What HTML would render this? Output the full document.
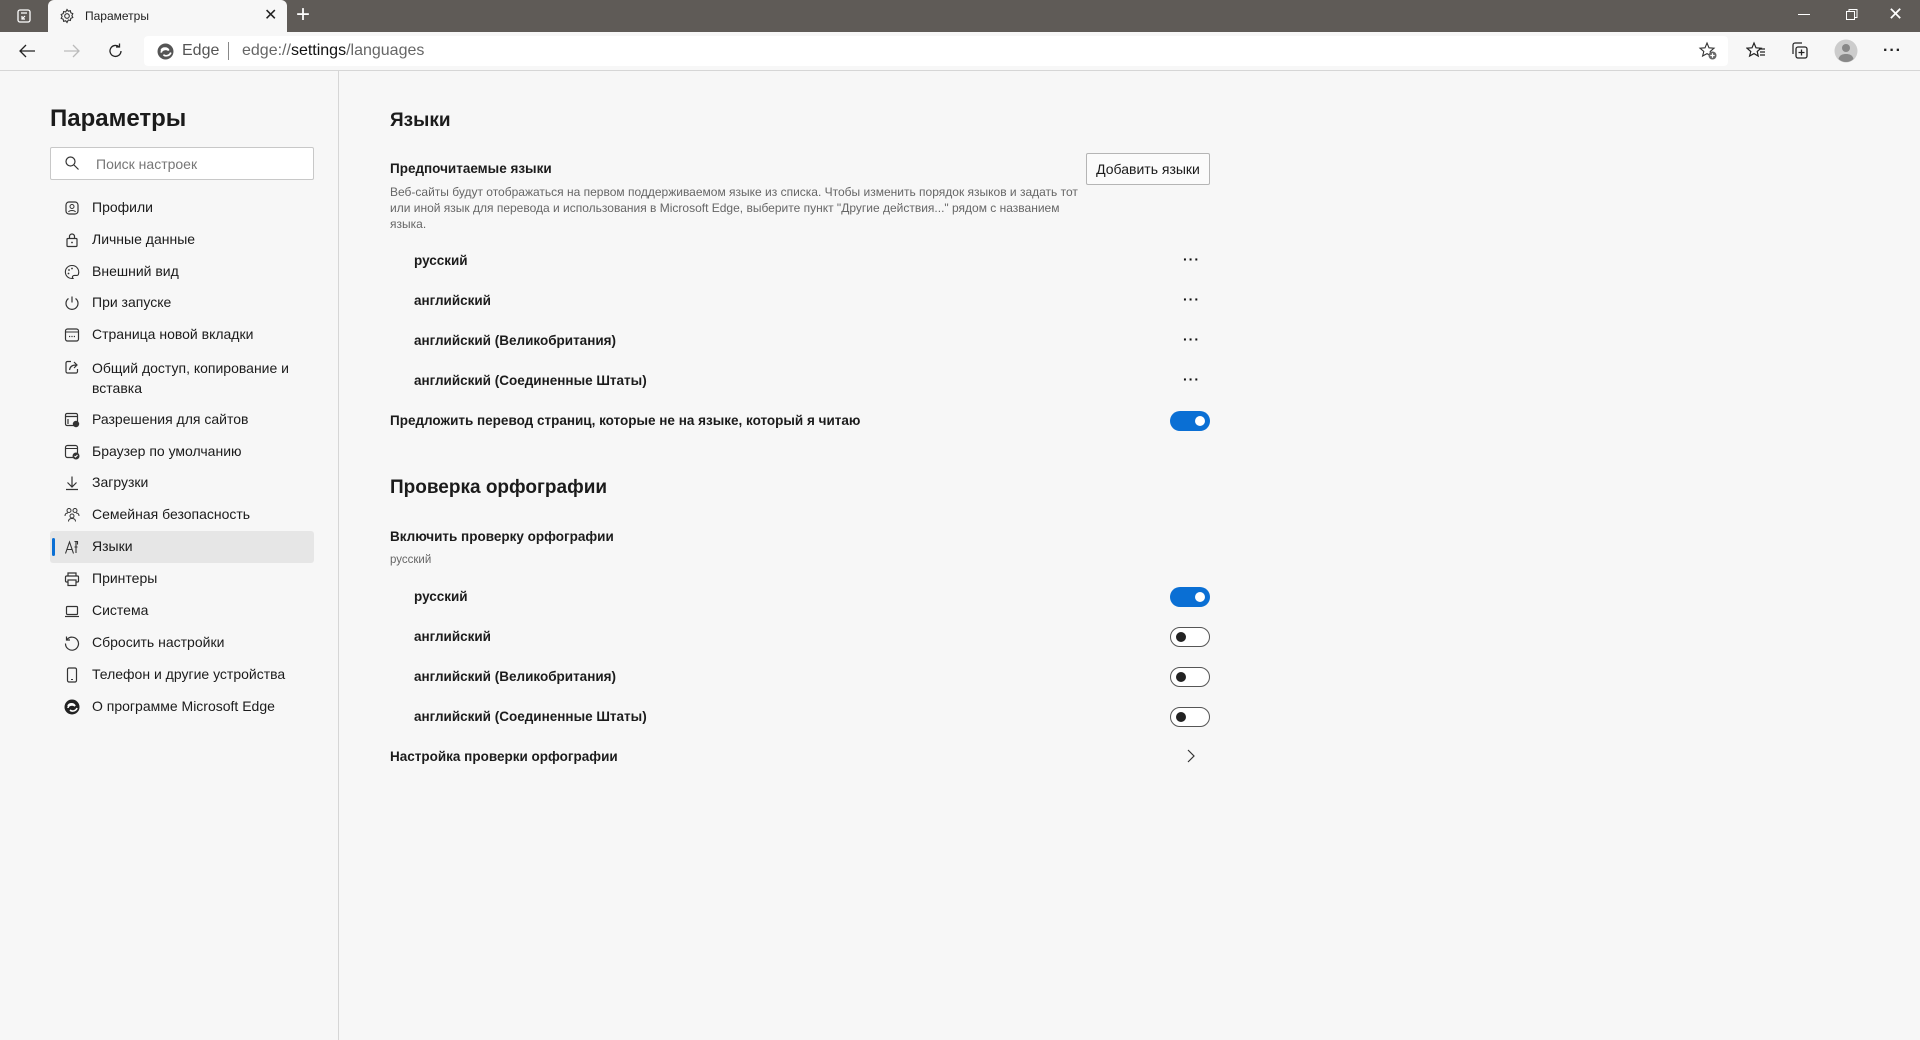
<!DOCTYPE html>
<html><head><meta charset="utf-8"><style>
*{box-sizing:border-box;margin:0;padding:0}
body{width:1920px;height:1040px;overflow:hidden;background:#f7f7f7;font-family:"Liberation Sans","Noto Sans CJK SC",sans-serif;color:#1b1b1b;position:relative}
.a{position:absolute;white-space:nowrap}
.title{top:0;left:0;width:1920px;height:32px;background:#5f5b57}
.tab{left:48px;top:0;width:239px;height:33px;background:#f7f7f7;border-radius:6px 6px 0 0}
.tb{top:32px;left:0;width:1920px;height:39px;background:#f7f7f7;border-bottom:1px solid #d6d6d6}
.addr{left:144px;top:36px;width:1584px;height:30px;background:#fff;border-radius:4px}
.side{left:0;top:71px;width:339px;height:969px;border-right:1px solid #d6d6d6}
.nav{left:92px;font-size:14px;color:#1b1b1b}
.ic{left:64px;width:16px;height:16px}
.lbl{font-size:13.5px;font-weight:600;color:#1b1b1b}
.lang{left:414px;font-size:13.5px;font-weight:600}
.dots{left:1183px;font-size:14px;font-weight:700;letter-spacing:1px;color:#111}
.tog{left:1170px;width:40px;height:20px;border-radius:10px}
.on{background:#0a6fd4}
.on::after{content:"";position:absolute;right:5px;top:5px;width:10px;height:10px;border-radius:50%;background:#fff}
.off{border:1px solid #555;background:#fff}
.off::after{content:"";position:absolute;left:5px;top:4px;width:10px;height:10px;border-radius:50%;background:#222}
</style></head><body>
<div class="a title"></div>
<svg class="a" style="left:16px;top:8px" width="16" height="16" viewBox="0 0 16 16"><rect x="2" y="2" width="12" height="12" rx="2" fill="none" stroke="#fff" stroke-width="1.3"/><path d="M5 5h6M9 8l-3 3M6 8v3h3" stroke="#fff" stroke-width="1.2" fill="none"/></svg>
<div class="a tab"></div>
<svg class="a" style="left:59px;top:8px" width="16" height="16" viewBox="0 0 16 16"><circle cx="8" cy="8" r="2.3" fill="none" stroke="#333" stroke-width="1.1"/><path d="M8 1.5l1.3 1.7 2.1-.5.4 2.1 2 .9-.9 1.9.9 1.9-2 .9-.4 2.1-2.1-.5L8 14.5l-1.3-1.7-2.1.5-.4-2.1-2-.9.9-1.9-.9-1.9 2-.9.4-2.1 2.1.5z" fill="none" stroke="#333" stroke-width="1.1"/></svg>
<div class="a" style="left:85px;top:9px;font-size:12px;color:#222">Параметры</div>
<div class="a" style="left:264px;top:5px;font-size:16px;color:#222">✕</div>
<div class="a" style="left:296px;top:1px;font-size:24px;color:#fff;font-weight:300">+</div>
<div class="a" style="left:1798px;top:14px;width:12px;height:1px;background:#fff"></div>
<svg class="a" style="left:1845px;top:8px" width="14" height="14" viewBox="0 0 14 14"><rect x="1.5" y="3.5" width="8" height="8" fill="none" stroke="#fff"/><path d="M4 3.5V1.5h8v8h-2.5" fill="none" stroke="#fff"/></svg>
<div class="a" style="left:1888px;top:4px;font-size:18px;color:#fff">✕</div>
<div class="a tb"></div>
<svg class="a" style="left:18px;top:43px" width="18" height="16" viewBox="0 0 18 16"><path d="M17 8H2M8 2L2 8l6 6" fill="none" stroke="#222" stroke-width="1.3"/></svg>
<svg class="a" style="left:63px;top:43px" width="18" height="16" viewBox="0 0 18 16"><path d="M1 8h15M10 2l6 6-6 6" fill="none" stroke="#bbb" stroke-width="1.3"/></svg>
<svg class="a" style="left:107px;top:42px" width="18" height="18" viewBox="0 0 18 18"><path d="M14 9a5.5 5.5 0 1 1-2-4.3M12.5 1.5v3.5H9" fill="none" stroke="#222" stroke-width="1.3"/></svg>
<div class="a addr"></div>
<svg class="a" style="left:157px;top:43px" width="17" height="17" viewBox="0 0 16 16"><circle cx="8" cy="8" r="7.5" fill="#555"/><path d="M4 9c0-3 5-4 7-2-1-3-6-3-7 0M6 11c2 2 6 1 7-2" stroke="#fff" stroke-width="1.6" fill="none"/></svg>
<div class="a" style="left:182px;top:42px;font-size:16px;color:#555">Edge</div>
<div class="a" style="left:228px;top:42px;width:1px;height:18px;background:#888"></div>
<div class="a" style="left:242px;top:42px;font-size:16px;color:#666">edge://<span style="color:#111">settings</span>/languages</div>
<svg class="a" style="left:1698px;top:41px" width="20" height="20" viewBox="0 0 20 20"><path d="M9 2l2 4.8 5 .4-3.8 3.3 1 4.5L9 12.6 4.6 15l1.2-4.5L2 7.2l5-.4z" fill="none" stroke="#333" stroke-width="1.1"/><circle cx="14.5" cy="14.5" r="4" fill="#666"/><path d="M14.5 12.3v4.4M12.3 14.5h4.4" stroke="#fff" stroke-width="1.2"/></svg>
<svg class="a" style="left:1746px;top:41px" width="20" height="20" viewBox="0 0 20 20"><path d="M8 2l2 4.8 5 .4-3.8 3.3 1 4.5L8 12.6 3.6 15l1.2-4.5L1 7.2l5-.4z" fill="none" stroke="#222" stroke-width="1.2"/><path d="M13 8h6M14 11h5M14 14h5" stroke="#222" stroke-width="1.2"/></svg>
<svg class="a" style="left:1790px;top:41px" width="20" height="20" viewBox="0 0 20 20"><path d="M3 13V4a2 2 0 0 1 2-2h7" fill="none" stroke="#222" stroke-width="1.2"/><rect x="6" y="6" width="11" height="11" rx="2" fill="none" stroke="#222" stroke-width="1.3"/><path d="M11.5 8.5v6M8.5 11.5h6" stroke="#222" stroke-width="1.3"/></svg>
<svg class="a" style="left:1834px;top:39px" width="24" height="24" viewBox="0 0 24 24"><circle cx="12" cy="12" r="11.5" fill="#ccc"/><circle cx="12" cy="9" r="4" fill="#888"/><path d="M4.5 20c1-4 4-5 7.5-5s6.5 1 7.5 5a11 11 0 0 1-15 0z" fill="#888"/></svg>
<div class="a" style="left:1883px;top:42px;font-size:16px;font-weight:700;letter-spacing:1px;color:#222">···</div>

<div class="a side"></div>
<div class="a" style="left:50px;top:105px;font-size:24px;font-weight:600;color:#1b1b1b">Параметры</div>
<div class="a" style="left:50px;top:147px;width:264px;height:33px;background:#fff;border:1px solid #c8c8c8;border-radius:2px"></div>
<svg class="a" style="left:64px;top:155px" width="16" height="16" viewBox="0 0 16 16"><circle cx="6.5" cy="6.5" r="4.5" fill="none" stroke="#333" stroke-width="1.2"/><path d="M10 10l4.5 4.5" stroke="#333" stroke-width="1.2"/></svg>
<div class="a" style="left:96px;top:156px;font-size:14px;color:#777">Поиск настроек</div>
<div class="a" style="left:50px;top:531px;width:264px;height:32px;background:#e6e6e6;border-radius:3px"></div>
<div class="a" style="left:52px;top:538px;width:3px;height:18px;background:#0a6fd4;border-radius:2px"></div>

<svg class="a ic" style="top:200px" viewBox="0 0 16 16"><rect x="2" y="2" width="12" height="12" rx="3" fill="none" stroke="#333" stroke-width="1.2"/><circle cx="8" cy="6.5" r="2" fill="none" stroke="#333"/><path d="M4.5 12c1-2 6-2 7 0" fill="none" stroke="#333"/></svg>
<div class="a nav" style="top:199px">Профили</div>
<svg class="a ic" style="top:232px" viewBox="0 0 16 16"><rect x="3" y="6.5" width="10" height="8" rx="1" fill="none" stroke="#333" stroke-width="1.2"/><path d="M5.5 6.5V4.5a2.5 2.5 0 0 1 5 0v2" fill="none" stroke="#333" stroke-width="1.2"/><circle cx="8" cy="10.5" r=".9" fill="#333"/></svg>
<div class="a nav" style="top:231px">Личные данные</div>
<svg class="a ic" style="top:264px" viewBox="0 0 16 16"><path d="M8 1.5a6.5 6.5 0 1 0 1 12.9c-1.5-1.5 0-3 1.5-3h2.5a1.5 1.5 0 0 0 1.5-1.6A6.6 6.6 0 0 0 8 1.5z" fill="none" stroke="#333" stroke-width="1.1"/><circle cx="5" cy="6" r=".9" fill="#333"/><circle cx="8" cy="4.5" r=".9" fill="#333"/><circle cx="4.5" cy="9.5" r=".9" fill="#333"/></svg>
<div class="a nav" style="top:263px">Внешний вид</div>
<svg class="a ic" style="top:295px" viewBox="0 0 16 16"><path d="M8 1.5v6M4.5 3.5a6 6 0 1 0 7 0" fill="none" stroke="#333" stroke-width="1.2"/></svg>
<div class="a nav" style="top:294px">При запуске</div>
<svg class="a ic" style="top:327px" viewBox="0 0 16 16"><rect x="1.5" y="2" width="13" height="12" rx="2" fill="none" stroke="#333" stroke-width="1.2"/><path d="M1.5 5h13" stroke="#333"/><path d="M5 9.5h1.2M7.4 9.5h1.2M9.8 9.5h1.2" stroke="#333" stroke-width="1.3"/></svg>
<div class="a nav" style="top:326px">Страница новой вкладки</div>
<svg class="a ic" style="top:359px" viewBox="0 0 16 16"><path d="M7 2.5H3.5a1.5 1.5 0 0 0-1.5 1.5v8.5A1.5 1.5 0 0 0 3.5 14H12a1.5 1.5 0 0 0 1.5-1.5V10" fill="none" stroke="#333" stroke-width="1.2"/><path d="M5.5 11c.5-3.5 3-5 6.5-5M10 3l3 3-3 3" fill="none" stroke="#333" stroke-width="1.2"/></svg>
<div class="a nav" style="top:358px;line-height:20px;white-space:normal;width:215px">Общий доступ, копирование и вставка</div>
<svg class="a ic" style="top:412px" viewBox="0 0 16 16"><rect x="1.5" y="1.5" width="12" height="12" rx="1.5" fill="none" stroke="#333" stroke-width="1.2"/><path d="M1.5 4.5h12M4 7v5" stroke="#333" stroke-width="1.2"/><circle cx="12" cy="12" r="3.2" fill="#333"/></svg>
<div class="a nav" style="top:411px">Разрешения для сайтов</div>
<svg class="a ic" style="top:444px" viewBox="0 0 16 16"><rect x="1.5" y="1.5" width="12" height="12" rx="2" fill="none" stroke="#333" stroke-width="1.2"/><path d="M1.5 4.5h12" stroke="#333"/><circle cx="12" cy="12" r="3.5" fill="#333"/><path d="M10.5 12l1 1 2-2" stroke="#fff" fill="none"/></svg>
<div class="a nav" style="top:443px">Браузер по умолчанию</div>
<svg class="a ic" style="top:475px" viewBox="0 0 16 16"><path d="M8 1.5v10M3.5 7.5l4.5 4.5 4.5-4.5M2 14.5h12" fill="none" stroke="#333" stroke-width="1.2"/></svg>
<div class="a nav" style="top:474px">Загрузки</div>
<svg class="a ic" style="top:507px" viewBox="0 0 16 16"><circle cx="5" cy="3.5" r="2" fill="none" stroke="#333"/><circle cx="11" cy="3.5" r="2" fill="none" stroke="#333"/><circle cx="8" cy="9" r="2" fill="none" stroke="#333"/><path d="M1 9c0-2 1-3 3-3M15 9c0-2-1-3-3-3M4.5 14.5c0-2 1.5-3 3.5-3s3.5 1 3.5 3" fill="none" stroke="#333"/></svg>
<div class="a nav" style="top:506px">Семейная безопасность</div>
<svg class="a ic" style="top:539px" viewBox="0 0 16 16"><path d="M1.5 14.5L5.5 3l4 11.5M3 10.5h5M10.5 2.5h3v3M12 3v11M10.5 8h3" fill="none" stroke="#333" stroke-width="1.1"/></svg>
<div class="a nav" style="top:538px">Языки</div>
<svg class="a ic" style="top:571px" viewBox="0 0 16 16"><path d="M4 5V2h8v3M4 11H2.5a1 1 0 0 1-1-1V6a1 1 0 0 1 1-1h11a1 1 0 0 1 1 1v4a1 1 0 0 1-1 1H12" fill="none" stroke="#333" stroke-width="1.2"/><rect x="4" y="9" width="8" height="5.5" fill="none" stroke="#333" stroke-width="1.2"/></svg>
<div class="a nav" style="top:570px">Принтеры</div>
<svg class="a ic" style="top:603px" viewBox="0 0 16 16"><rect x="2.5" y="3.5" width="11" height="8" rx="1" fill="none" stroke="#333" stroke-width="1.2"/><path d="M1 13.5h14" stroke="#333" stroke-width="1.2"/></svg>
<div class="a nav" style="top:602px">Система</div>
<svg class="a ic" style="top:635px" viewBox="0 0 16 16"><path d="M3 4.5A6.5 6.5 0 1 1 1.5 8.5M2.5 1.5v3.5H6" fill="none" stroke="#333" stroke-width="1.2"/></svg>
<div class="a nav" style="top:634px">Сбросить настройки</div>
<svg class="a ic" style="top:667px" viewBox="0 0 16 16"><rect x="3.5" y="1" width="9" height="14" rx="1.5" fill="none" stroke="#333" stroke-width="1.2"/><path d="M7 12.5h2" stroke="#333"/></svg>
<div class="a nav" style="top:666px">Телефон и другие устройства</div>
<svg class="a ic" style="top:699px" viewBox="0 0 16 16"><circle cx="8" cy="8" r="7.5" fill="#222"/><path d="M4 9c0-3 5-4 7-2-1-3-6-3-7 0M6 11c2 2 6 1 7-2" stroke="#fff" stroke-width="1.6" fill="none"/></svg>
<div class="a nav" style="top:698px">О программе Microsoft Edge</div>

<div class="a" style="left:390px;top:110px;font-size:19px;font-weight:600">Языки</div>
<div class="a lbl" style="left:390px;top:161px">Предпочитаемые языки</div>
<div class="a" style="left:1086px;top:153px;width:124px;height:32px;border:1px solid #b5b5b5;border-radius:2px;font-size:14px;text-align:center;line-height:30px;background:#fbfbfb">Добавить языки</div>
<div class="a" style="left:390px;top:184px;width:690px;white-space:normal;font-size:12px;line-height:16px;color:#666">Веб-сайты будут отображаться на первом поддерживаемом языке из списка. Чтобы изменить порядок языков и задать тот или иной язык для перевода и использования в Microsoft Edge, выберите пункт "Другие действия..." рядом с названием языка.</div>
<div class="a lang" style="top:253px">русский</div><div class="a dots" style="top:251px">···</div>
<div class="a lang" style="top:293px">английский</div><div class="a dots" style="top:291px">···</div>
<div class="a lang" style="top:333px">английский (Великобритания)</div><div class="a dots" style="top:331px">···</div>
<div class="a lang" style="top:373px">английский (Соединенные Штаты)</div><div class="a dots" style="top:371px">···</div>
<div class="a lbl" style="left:390px;top:413px">Предложить перевод страниц, которые не на языке, который я читаю</div>
<div class="a tog on" style="top:411px"></div>

<div class="a" style="left:390px;top:477px;font-size:19px;font-weight:600">Проверка орфографии</div>
<div class="a lbl" style="left:390px;top:529px">Включить проверку орфографии</div>
<div class="a" style="left:390px;top:554px;font-size:11.5px;color:#666">русский</div>
<div class="a lang" style="top:589px">русский</div><div class="a tog on" style="top:587px"></div>
<div class="a lang" style="top:629px">английский</div><div class="a tog off" style="top:627px"></div>
<div class="a lang" style="top:669px">английский (Великобритания)</div><div class="a tog off" style="top:667px"></div>
<div class="a lang" style="top:709px">английский (Соединенные Штаты)</div><div class="a tog off" style="top:707px"></div>
<div class="a lbl" style="left:390px;top:749px">Настройка проверки орфографии</div>
<svg class="a" style="left:1186px;top:748px" width="10" height="16" viewBox="0 0 10 16"><path d="M2 2l6 6-6 6" fill="none" stroke="#333" stroke-width="1.2"/></svg>
</body></html>
